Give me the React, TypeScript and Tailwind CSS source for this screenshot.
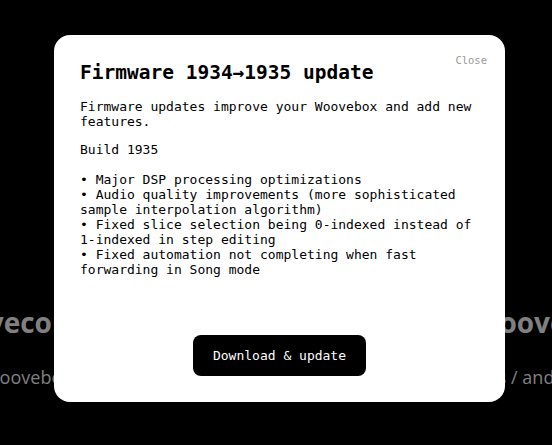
import React from 'react'

const notes = [
  'Major DSP processing optimizations',
  'Audio quality improvements (more sophisticated sample interpolation algorithm)',
  'Fixed slice selection being 0-indexed instead of 1-indexed in step editing',
  'Fixed automation not completing when fast forwarding in Song mode',
]

function UpdateDialog() {
  return (
    <div className="absolute inset-0 pl-[54px] pt-[35px]">
      <div className="relative flex h-[367px] w-[451px] flex-col rounded-[16px] bg-white px-[26px] pb-[26px] pt-[26px] text-black [font-family:'DejaVu_Sans_Mono',monospace]">
        <button className="absolute right-[18px] top-[17px] text-[10.5px] leading-[16px] text-[#9a9a9a]">
          Close
        </button>
        <h2 className="text-[19.5px] font-bold leading-[23px]">Firmware 1934→1935 update</h2>
        <p className="mt-[15px] text-[13px] leading-[15px]">
          Firmware updates improve your Woovebox and add new features.
        </p>
        <div className="mt-[13px] text-[13px] leading-[15px]">
          <p>Build 1935</p>
          <p>&nbsp;</p>
          {notes.map(n => (
            <p key={n}>• {n}</p>
          ))}
        </div>
        <div className="mt-auto flex justify-center">
          <button className="h-[41px] rounded-[8px] bg-black px-[20px] text-[13px] text-white">
            Download &amp; update
          </button>
        </div>
      </div>
    </div>
  )
}

export default function App() {
  return (
    <div className="relative h-[445px] w-full overflow-hidden bg-black [font-family:'Open_Sans',sans-serif]">
      <div className="pt-[302px] text-[#808080]">
        <div className="-ml-[74px] whitespace-nowrap text-[28px] font-bold leading-[40px]">
          Woovecontrol — manage &amp; update the Woovebox
        </div>
        <div className="-ml-[17px] mt-[22px] whitespace-nowrap text-[18px] leading-[26px]">
          Woovebox Companion lets you update firmware, export songs / and samples
        </div>
      </div>
      <UpdateDialog />
    </div>
  )
}
